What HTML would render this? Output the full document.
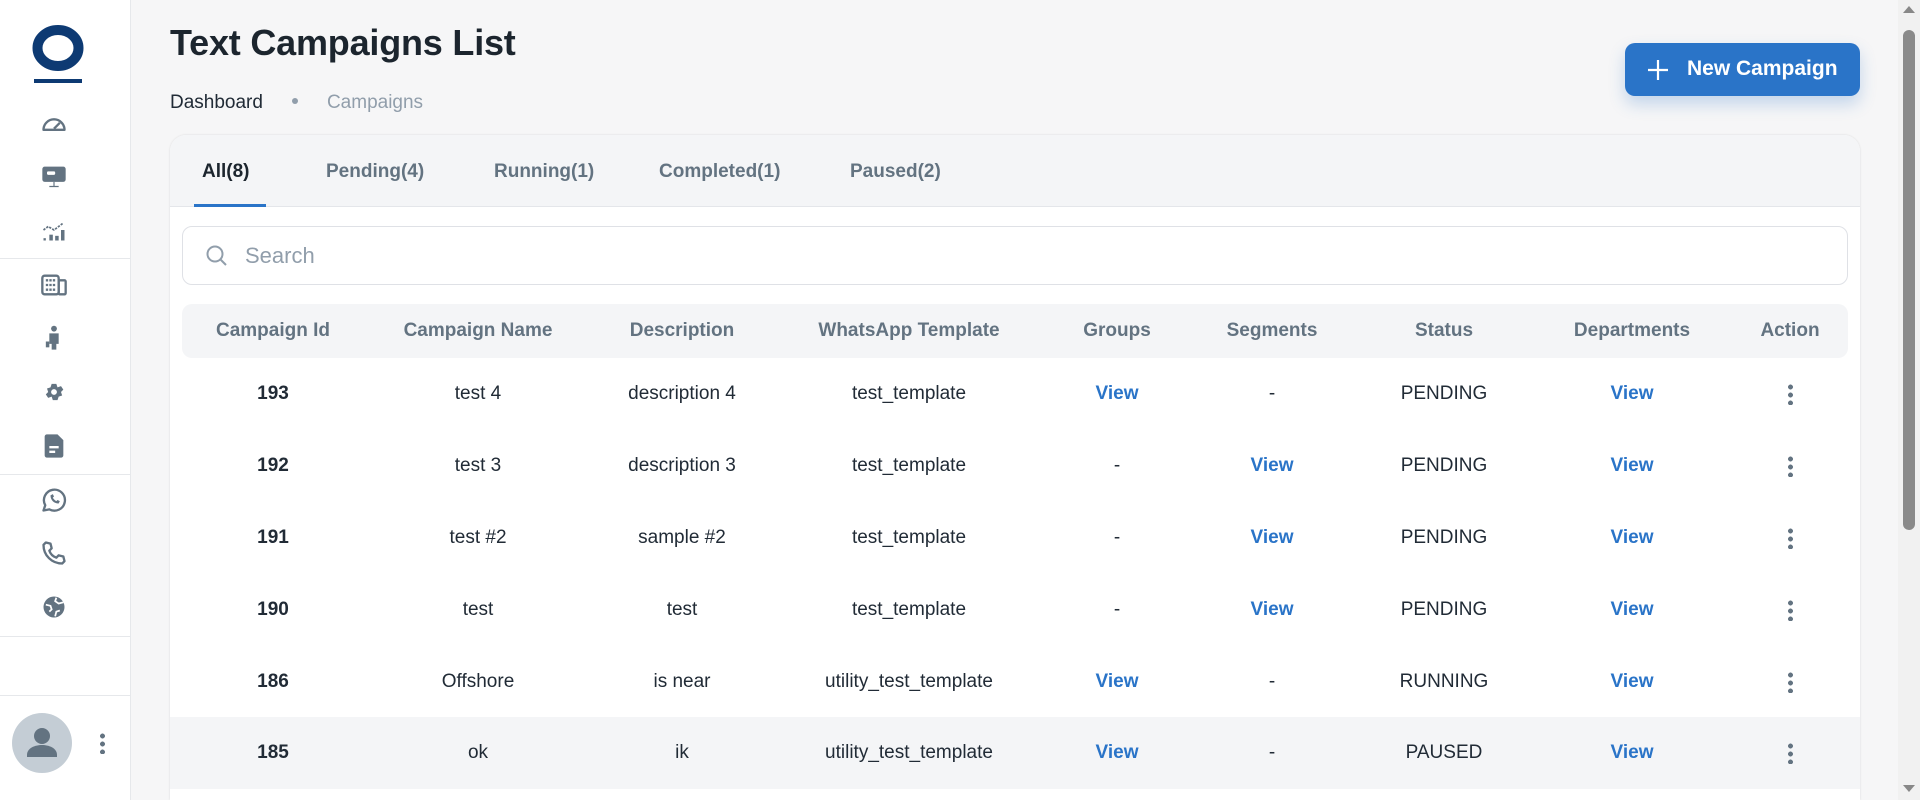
<!DOCTYPE html>
<html><head><meta charset="utf-8"><style>
*{box-sizing:border-box;margin:0;padding:0}
html{width:1920px;height:800px;overflow:hidden}
body{width:1920px;height:800px;overflow:hidden;background:#f6f6f7;font-family:"Liberation Sans",sans-serif;color:#212b36;position:relative}
.side{position:absolute;left:0;top:0;width:131px;height:800px;background:#fff;border-right:1px solid #e6e8eb}
.ic{position:absolute;left:40px;width:28px;height:28px}
.hr{position:absolute;left:0;width:130px;height:1px;background:#e6e8eb}
h1{position:absolute;left:170px;top:22px;font-size:36px;font-weight:bold;color:#1c252e;letter-spacing:-0.2px}
.bc{position:absolute;left:170px;top:92px;font-size:19px}
.bc span.d{display:inline-block;width:6px;height:6px;border-radius:3px;background:#919eab;margin:0 29px 4px 29px}
.btn{position:absolute;left:1625px;top:43px;width:235px;height:53px;background:#2a74c8;border-radius:10px;color:#fff;font-weight:bold;font-size:21px;box-shadow:0 8px 16px rgba(42,116,200,.25)}
.card{position:absolute;left:170px;top:135px;width:1690px;height:665px;background:#fff;border-radius:16px 16px 0 0;overflow:hidden;box-shadow:0 0 2px rgba(0,0,0,.12)}
.tabs{height:72px;background:#f4f5f7;border-bottom:1px solid #e4e6ea;position:relative}
.tab{position:absolute;top:26px;font-size:19px;font-weight:bold;color:#637381}
.search{position:absolute;left:12px;top:91px;width:1666px;height:59px;border:1px solid #dfe1e6;border-radius:10px}
.search span{position:absolute;left:62px;top:16px;font-size:22px;color:#919eab}
.th{position:absolute;left:12px;top:169px;width:1666px;height:54px;background:#f4f5f7;border-radius:10px;display:flex;font-weight:bold;color:#637381;font-size:19px;align-items:center}
.row{position:absolute;left:0;width:1690px;height:72px;display:flex;align-items:center;padding-left:12px;font-size:19px}
.c{text-align:center;flex:none}
.w1{width:182px}.w2{width:228px}.w3{width:180px}.w4{width:274px}.w5{width:142px}.w6{width:168px}.w7{width:176px}.w8{width:200px}.w9{width:116px}
.v{color:#2a74c8;font-weight:bold}
.dots{display:inline-block;width:5px;height:22px;background:radial-gradient(circle,#637381 2.3px,transparent 2.6px) 0 0/5px 8px repeat-y;vertical-align:middle}
.sb{position:absolute;left:1898px;top:0;width:22px;height:800px;background:#f1f1f1}
</style></head><body>
<div class="side">
 <svg style="position:absolute;left:32px;top:24px" width="52" height="60" viewBox="0 0 52 60"><ellipse cx="26" cy="24" rx="20.5" ry="18" fill="none" stroke="#0d3a73" stroke-width="10"/><rect x="2" y="55" width="48" height="4" fill="#0d3a73"/></svg>
 <svg class="ic" style="top:110px" viewBox="0 0 24 24"><path d="M3 17a9 9 0 0 1 18 0z" fill="none" stroke="#637381" stroke-width="2" stroke-linejoin="round"/><path d="M12 16l5-5" stroke="#637381" stroke-width="2"/></svg>
 <svg class="ic" style="top:162px" viewBox="0 0 24 24"><rect x="2" y="4" width="20" height="13" rx="2" fill="#637381"/><rect x="6" y="8" width="7" height="3" rx="1" fill="#fff"/><path d="M12 17v4M8 21h8" stroke="#637381" stroke-width="1"/></svg>
 <svg class="ic" style="top:216px" viewBox="0 0 24 24"><path d="M3 12l4-3 5 3 8-6" fill="none" stroke="#637381" stroke-width="1.5" stroke-dasharray="2 1"/><rect x="3" y="19" width="2" height="2" fill="#637381"/><rect x="8" y="16" width="3" height="5" fill="#637381"/><rect x="13" y="17" width="3" height="4" fill="#637381"/><rect x="18" y="12" width="3" height="9" fill="#637381"/></svg>
 <div class="hr" style="top:258px"></div>
 <svg class="ic" style="top:271px" viewBox="0 0 24 24"><rect x="2" y="4" width="14" height="16" rx="2" fill="none" stroke="#637381" stroke-width="2"/><rect x="16" y="8" width="6" height="12" rx="1" fill="none" stroke="#637381" stroke-width="2"/><path d="M5 8h8M5 12h8M5 16h8" stroke="#637381" stroke-width="2" stroke-dasharray="2 1"/></svg>
 <svg class="ic" style="top:324px" viewBox="0 0 24 24"><circle cx="12" cy="4" r="2.5" fill="#637381"/><path d="M8 8h8v9h-2v5h-4v-5H8z" fill="#637381"/><rect x="5" y="15" width="3" height="5" fill="#637381"/></svg>
 <svg class="ic" style="top:378px" viewBox="0 0 24 24"><path d="M10 2h4l1 3 3-1 2 3-2 2 1 3-3 1-1 3h-4l-1-3-3 1-2-3 2-2-1-3 3-1z" transform="translate(0 3)" fill="#637381"/><circle cx="12" cy="12" r="2.5" fill="#fff"/></svg>
 <svg class="ic" style="top:432px" viewBox="0 0 24 24"><path d="M6 2h9l5 5v13a2 2 0 0 1-2 2H6a2 2 0 0 1-2-2V4a2 2 0 0 1 2-2z" fill="#637381"/><path d="M8 13h8M8 17h5" stroke="#fff" stroke-width="2"/></svg>
 <div class="hr" style="top:474px"></div>
 <svg class="ic" style="top:486px" viewBox="0 0 24 24"><path d="M3 21l1.5-4.5A9 9 0 1 1 8 20z" fill="none" stroke="#637381" stroke-width="2" stroke-linejoin="round"/><path d="M9 8c0 4 3 7 7 7l1-2-2-1-1 1c-1-.5-2.5-2-3-3l1-1-1-2z" fill="#637381"/></svg>
 <svg class="ic" style="top:539px" viewBox="0 0 24 24"><path d="M5 3l4 1 1 4-2 2c1 3 3 5 6 6l2-2 4 1 1 4-2 2C10 21 3 14 3 5z" fill="none" stroke="#637381" stroke-width="2" stroke-linejoin="round"/></svg>
 <svg class="ic" style="top:593px" viewBox="0 0 24 24"><circle cx="12" cy="12" r="9" fill="#637381"/><path d="M5 10l4 1 1 3-2 2M14 4l-1 3 3 2 4-1M13 20l1-4 3-1" stroke="#fff" stroke-width="1.5" fill="none"/></svg>
 <div class="hr" style="top:636px"></div>
 <div class="hr" style="top:695px"></div>
 <div style="position:absolute;left:12px;top:713px;width:60px;height:60px;border-radius:30px;background:#c4cdd5;overflow:hidden"><svg width="60" height="60" viewBox="0 0 60 60"><circle cx="30" cy="23" r="8" fill="#637381"/><path d="M15 42c0-7 8-10 15-10s15 3 15 10v2H15z" fill="#637381"/></svg></div>
 <span class="dots" style="position:absolute;left:100px;top:732px"></span>
</div>
<h1>Text Campaigns List</h1>
<div class="bc">Dashboard<span class="d"></span><span style="color:#919eab">Campaigns</span></div>
<div class="btn"><svg style="position:absolute;left:22px;top:16px" width="22" height="22" viewBox="0 0 22 22"><path d="M11 1v20M1 11h20" stroke="#fff" stroke-width="2.2"/></svg><span style="position:absolute;left:62px;top:14px">New Campaign</span></div>
<div class="card">
 <div class="tabs">
  <div class="tab" style="left:32px;color:#1c252e">All(8)</div>
  <div style="position:absolute;left:24px;top:69px;width:72px;height:3px;background:#2a74c8"></div>
  <div class="tab" style="left:156px">Pending(4)</div>
  <div class="tab" style="left:324px">Running(1)</div>
  <div class="tab" style="left:489px">Completed(1)</div>
  <div class="tab" style="left:680px">Paused(2)</div>
 </div>
 <div class="search"><svg style="position:absolute;left:22px;top:17px" width="24" height="24" viewBox="0 0 24 24"><circle cx="10" cy="10" r="7.5" fill="none" stroke="#919eab" stroke-width="2"/><path d="M15.5 15.5l5.5 5.5" stroke="#919eab" stroke-width="2"/></svg><span>Search</span></div>
 <div class="th"><div class="c w1">Campaign Id</div><div class="c w2">Campaign Name</div><div class="c w3">Description</div><div class="c w4">WhatsApp Template</div><div class="c w5">Groups</div><div class="c w6">Segments</div><div class="c w7">Status</div><div class="c w8">Departments</div><div class="c w9">Action</div></div>
 <div class="row" style="top:223px"><div class="c w1"><b>193</b></div><div class="c w2">test 4</div><div class="c w3">description 4</div><div class="c w4">test_template</div><div class="c w5 v">View</div><div class="c w6">-</div><div class="c w7">PENDING</div><div class="c w8 v">View</div><div class="c w9"><span class="dots"></span></div></div>
 <div class="row" style="top:295px"><div class="c w1"><b>192</b></div><div class="c w2">test 3</div><div class="c w3">description 3</div><div class="c w4">test_template</div><div class="c w5">-</div><div class="c w6 v">View</div><div class="c w7">PENDING</div><div class="c w8 v">View</div><div class="c w9"><span class="dots"></span></div></div>
 <div class="row" style="top:367px"><div class="c w1"><b>191</b></div><div class="c w2">test #2</div><div class="c w3">sample #2</div><div class="c w4">test_template</div><div class="c w5">-</div><div class="c w6 v">View</div><div class="c w7">PENDING</div><div class="c w8 v">View</div><div class="c w9"><span class="dots"></span></div></div>
 <div class="row" style="top:439px"><div class="c w1"><b>190</b></div><div class="c w2">test</div><div class="c w3">test</div><div class="c w4">test_template</div><div class="c w5">-</div><div class="c w6 v">View</div><div class="c w7">PENDING</div><div class="c w8 v">View</div><div class="c w9"><span class="dots"></span></div></div>
 <div class="row" style="top:511px"><div class="c w1"><b>186</b></div><div class="c w2">Offshore</div><div class="c w3">is near</div><div class="c w4">utility_test_template</div><div class="c w5 v">View</div><div class="c w6">-</div><div class="c w7">RUNNING</div><div class="c w8 v">View</div><div class="c w9"><span class="dots"></span></div></div>
 <div class="row" style="top:582px;background:#f4f5f7"><div class="c w1"><b>185</b></div><div class="c w2">ok</div><div class="c w3">ik</div><div class="c w4">utility_test_template</div><div class="c w5 v">View</div><div class="c w6">-</div><div class="c w7">PAUSED</div><div class="c w8 v">View</div><div class="c w9"><span class="dots"></span></div></div>
</div>
<div class="sb"><div style="position:absolute;left:5px;top:6px;width:0;height:0;border-left:6px solid transparent;border-right:6px solid transparent;border-bottom:7px solid #888"></div><div style="position:absolute;left:5px;top:30px;width:12px;height:500px;border-radius:6px;background:#8a8a8a"></div><div style="position:absolute;left:5px;top:785px;width:0;height:0;border-left:6px solid transparent;border-right:6px solid transparent;border-top:7px solid #888"></div></div>
</body></html>
